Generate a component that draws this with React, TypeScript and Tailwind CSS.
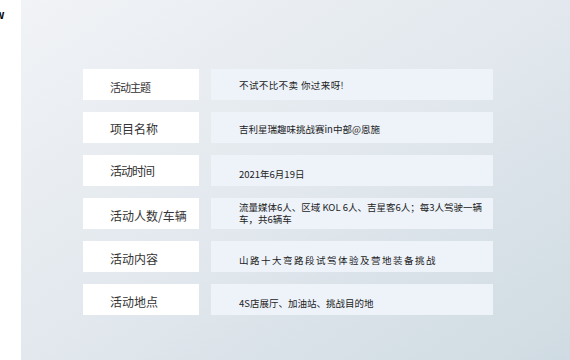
import React from "react";

const rows = [
  { label: "活动主题", value: "不试不比不卖 你过来呀!", lp: "pt-[4px]", vp: "", lt: "text-[11px] tracking-[-1px]", vt: "tracking-[0.4px]" },
  { label: "项目名称", value: "吉利星瑞趣味挑战赛in中部@恩施", lp: "pt-[3px]", vp: "pt-[3px]", lt: "text-[12px]", vt: "" },
  { label: "活动时间", value: "2021年6月19日", lp: "pt-[0px]", vp: "pt-[6px]", lt: "text-[12px] tracking-[-1px]", vt: "" },
  { label: "活动人数/车辆", value: "", lp: "pt-[5px]", vp: "", lt: "text-[12px]", vt: "" },
  { label: "活动内容", value: "山路十大弯路段试驾体验及营地装备挑战", lp: "pt-[5px]", vp: "pt-[7px]", lt: "text-[12px]", vt: "tracking-[1.5px]" },
  { label: "活动地点", value: "4S店展厅、加油站、挑战目的地", lp: "pt-[4px]", vp: "pt-[7px]", lt: "text-[12px]", vt: "" },
];

function App() {
  return (
    <div
      className="w-[570px] h-[360px] flex overflow-hidden bg-white"
      style={{ fontFamily: '"Noto Sans CJK SC", "Noto Sans", sans-serif' }}
    >
      {/* left strip */}
      <div className="w-[21px] h-full bg-white overflow-hidden">
        <span className="block ml-[-5px] mt-[8px] text-[11px] font-bold text-black leading-[12px]">w</span>
      </div>

      {/* main panel */}
      <div className="flex-1 h-full bg-gradient-to-br from-[#f1f3f6] via-[#e2e8ee] to-[#cfdbe2] pt-[69px] pl-[62px]">
        <div className="flex flex-col gap-[12px]">
          {rows.map((r, i) => (
            <div key={i} className="flex gap-[12px]">
              <div className={`w-[116px] h-[31px] bg-white flex items-center pl-[27px] ${r.lp}`}>
                <span className={`text-[#333] leading-[14px] whitespace-nowrap ${r.lt}`}>{r.label}</span>
              </div>
              <div className={`w-[282px] h-[31px] bg-[#eef3fa] flex pl-[28px] ${i === 3 ? "items-start pt-[3px]" : "items-center " + r.vp}`}>
                {i === 3 ? (
                  <span className="text-[9.5px] text-[#222] leading-[12px] whitespace-nowrap">
                    流量媒体6人、区域 KOL 6人、吉星客6人；每3人驾驶一辆
                    <br />
                    车，共6辆车
                  </span>
                ) : (
                  <span className={`text-[9.5px] text-[#222] leading-[12px] whitespace-nowrap ${r.vt}`}>{r.value}</span>
                )}
              </div>
            </div>
          ))}
        </div>
      </div>
    </div>
  );
}

export default App;
